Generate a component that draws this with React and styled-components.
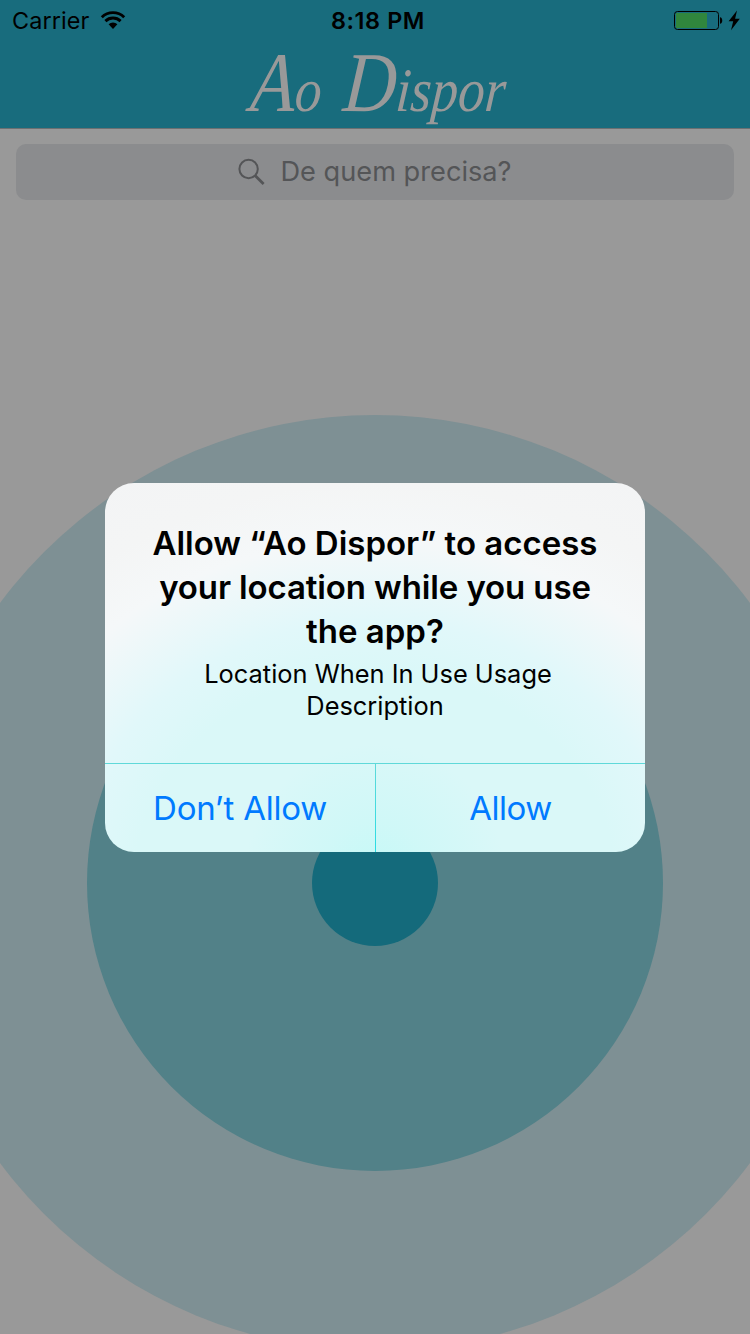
import React from 'react';
import styled, { createGlobalStyle } from 'styled-components';

const GlobalStyle = createGlobalStyle`
  *, *::before, *::after { box-sizing: border-box; }
  body { margin: 0; background: #999; }
`;

const Screen = styled.div`
  position: relative;
  display: flex;
  flex-direction: column;
  width: 750px;
  height: 1334px;
  overflow: hidden;
  background: #999999;
  font-family: Inter, 'Liberation Sans', sans-serif;
  color: #000;
`;

const Header = styled.header`
  display: flex;
  flex-direction: column;
  flex: none;
  height: 129px;
  background: #186c7d;
  border-bottom: 1px solid #6b7072;
`;

const StatusBar = styled.div`
  display: grid;
  grid-template-columns: 1fr auto 1fr;
  align-items: center;
  height: 40px;
  padding: 0 9px 0 12px;
  line-height: 38px;
  font-size: 23.4px;
`;

const Carrier = styled.div`
  display: flex;
  align-items: center;
  gap: 11px;
  letter-spacing: 0.1px;

  span { padding-top: 2px; }
`;

const Clock = styled.div`
  padding: 2px 0 0 3px;
  font-weight: 600;
  letter-spacing: 0.6px;
`;

const Power = styled.div`
  display: flex;
  justify-content: flex-end;
  align-items: center;
`;

const Logo = styled.h1`
  margin: 0;
  display: flex;
  justify-content: center;
  gap: 25px;
  height: 88px;
  line-height: 88px;
  font-family: 'Liberation Serif', serif;
  font-style: italic;
  font-weight: 400;
  font-size: 62px;
  color: #999999;
  transform: translate(4px, -2px) scaleX(0.86) skewX(-5deg);
`;

const LogoWord = styled.span`
  display: block;
  height: 88px;

  &::first-letter { font-size: 85px; }
`;

const SearchArea = styled.div`
  flex: none;
  padding: 15px 16px 16px;
`;

const SearchField = styled.div`
  display: flex;
  align-items: center;
  justify-content: center;
  gap: 15px;
  height: 56px;
  border-radius: 10px;
  background: #8b8c8e;
  color: #545557;
  font-size: 27.2px;

  span { padding-bottom: 2px; }
`;

const Radar = styled.main`
  flex: 1;
  min-height: 0;
  display: flex;
  justify-content: center;
  align-items: flex-start;
  padding-top: 199px;
  overflow: hidden;
`;

const Ring = styled.div`
  flex: none;
  display: flex;
  align-items: center;
  justify-content: center;
  width: ${(p) => p.$size}px;
  height: ${(p) => p.$size}px;
  border-radius: 50%;
  background: ${(p) => p.$color};
`;

const Overlay = styled.div`
  position: absolute;
  inset: 0;
  display: flex;
  align-items: center;
  justify-content: center;
`;

const Alert = styled.section`
  display: flex;
  flex-direction: column;
  width: 540px;
  height: 369px;
  border-radius: 29px;
  overflow: hidden;
  background:
    radial-gradient(circle 130px at 50% 106%, #c5f9f7 0%, rgba(205, 248, 247, 0.8) 40%, rgba(218, 248, 248, 0) 100%),
    radial-gradient(ellipse 545px 475px at 50% 108%, #daf8f8 0%, #daf8f8 44%, #e1f8fa 55%, #f5f8f9 72%, #f4f5f5 84%, #f3f4f5 100%);
`;

const Message = styled.div`
  flex: 1;
  padding-top: 38px;
  text-align: center;
`;

const Title = styled.h2`
  margin: 0;
  font-size: 33px;
  line-height: 44px;
  font-weight: 600;
`;

const Line = styled.span`
  display: block;
  letter-spacing: ${(p) => p.$spacing || 0}px;
  padding-left: ${(p) => p.$shift || 0}px;
`;

const Description = styled.p`
  margin: 5px 0 0;
  font-size: 25.4px;
  line-height: 32px;
`;

const Actions = styled.div`
  display: grid;
  grid-template-columns: 270px 1px 269px;
  height: 89px;
  border-top: 1px solid #5fd9d9;
`;

const Divider = styled.div`
  background: linear-gradient(#5fd9d9, #2adce3);
`;

const Action = styled.button`
  border: 0;
  padding: 0;
  background: none;
  font: 400 33px/88px Inter, 'Liberation Sans', sans-serif;
  color: #007aff;
  letter-spacing: ${(p) => p.$spacing || 0}px;
`;

const WifiIcon = () => (
  <svg width="26" height="20" viewBox="0 0 26 20">
    <g fill="none" stroke="#000" strokeWidth="2.9">
      <path d="M1.8 7.2A16 16 0 0 1 24.2 7.2" />
      <path d="M5.4 11.1A11 11 0 0 1 20.6 11.1" />
    </g>
    <path d="M8.6 14.2A6.4 6.4 0 0 1 17.4 14.2L13 18.9Z" />
  </svg>
);

const BatteryIcon = () => (
  <svg width="67" height="22" viewBox="0 0 67 22">
    <rect x="0.5" y="2.5" width="44" height="18" rx="3" fill="none" stroke="#000" />
    <rect x="2" y="4" width="31" height="15" fill="#30863d" />
    <path d="M46 8.2c3 .3 3 6.3 0 6.6z" />
    <path d="M63 1.4L54.6 12.2h4.6L57 21.2l8.8-11.4h-4.7z" />
  </svg>
);

const SearchIcon = () => (
  <svg width="27" height="28" viewBox="0 0 27 28" fill="none" stroke="#545557">
    <circle cx="10.6" cy="11" r="9.2" strokeWidth="2" />
    <path d="M17.3 17.7L25.6 26" strokeWidth="2.8" />
  </svg>
);

export default function App() {
  return (
    <Screen>
      <GlobalStyle />
      <Header>
        <StatusBar>
          <Carrier><span>Carrier</span><WifiIcon /></Carrier>
          <Clock>8:18 PM</Clock>
          <Power><BatteryIcon /></Power>
        </StatusBar>
        <Logo><LogoWord>Ao</LogoWord><LogoWord>Dispor</LogoWord></Logo>
      </Header>
      <SearchArea>
        <SearchField>
          <SearchIcon />
          <span>De quem precisa?</span>
        </SearchField>
      </SearchArea>
      <Radar>
        <Ring $size={936} $color="#7e9094">
          <Ring $size={576} $color="#528188">
            <Ring $size={126} $color="#146a7b" />
          </Ring>
        </Ring>
      </Radar>
      <Overlay>
        <Alert>
          <Message>
            <Title>
              <Line>Allow “Ao Dispor” to access</Line>
              <Line $spacing={-0.12}>your location while you use</Line>
              <Line>the app?</Line>
            </Title>
            <Description>
              <Line $shift={6}>Location When In Use Usage</Line>
              <Line>Description</Line>
            </Description>
          </Message>
          <Actions>
            <Action $spacing={-0.25}>Don’t Allow</Action>
            <Divider />
            <Action $spacing={-0.5}>Allow</Action>
          </Actions>
        </Alert>
      </Overlay>
    </Screen>
  );
}
